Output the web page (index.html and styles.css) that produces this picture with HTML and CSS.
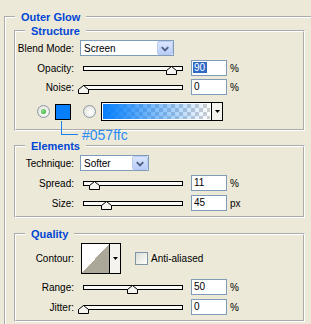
FILE: index.html
```html
<!DOCTYPE html>
<html lang="en">
<head>
<meta charset="UTF-8">
<meta name="viewport" content="width=device-width, initial-scale=1.0">
<title>Outer Glow</title>
<link rel="stylesheet" href="styles.css">
</head>
<body>

<div class="group outer">
  <span class="group-title">Outer Glow</span>

  <div class="group structure">
    <span class="group-title">Structure</span>
    <div class="row">
      <span class="label">Blend Mode:</span>
      <div class="select wide"><span class="select-text">Screen</span><span class="select-btn"><svg width="15" height="13" viewBox="0 0 15 13"><path d="M4 5 L7.5 8.5 L11 5" fill="none" stroke="#4d6185" stroke-width="2"/></svg></span></div>
    </div>
    <div class="row gap4">
      <span class="label">Opacity:</span>
      <div class="slider"><span class="thumb" style="left: 90%"><svg width="11" height="9" viewBox="0 0 11 9"><path d="M5.5 0.5 L10.5 4.5 L10.5 8.5 L0.5 8.5 L0.5 4.5 Z" fill="#f6f5f0" stroke="#000"/></svg></span></div>
      <div class="field"><span class="selected">90</span></div>
      <span class="unit">%</span>
    </div>
    <div class="row gap3">
      <span class="label">Noise:</span>
      <div class="slider"><span class="thumb" style="left: 0%"><svg width="11" height="9" viewBox="0 0 11 9"><path d="M5.5 0.5 L10.5 4.5 L10.5 8.5 L0.5 8.5 L0.5 4.5 Z" fill="#f6f5f0" stroke="#000"/></svg></span></div>
      <div class="field">0</div>
      <span class="unit">%</span>
    </div>
    <div class="color-row">
      <span class="radio checked"></span>
      <span class="swatch"></span>
      <span class="radio"></span>
      <div class="gradient">
        <span class="gradient-fill"></span>
        <span class="drop"><svg width="9" height="5" viewBox="0 0 9 5"><path d="M2 1 L7 1 L4.5 4 Z" fill="#000"/></svg></span>
      </div>
    </div>
  </div>

  <div class="group elements">
    <span class="group-title">Elements</span>
    <div class="row">
      <span class="label">Technique:</span>
      <div class="select narrow"><span class="select-text">Softer</span><span class="select-btn"><svg width="15" height="13" viewBox="0 0 15 13"><path d="M4 5 L7.5 8.5 L11 5" fill="none" stroke="#4d6185" stroke-width="2"/></svg></span></div>
    </div>
    <div class="row gap4">
      <span class="label">Spread:</span>
      <div class="slider"><span class="thumb" style="left: 11%"><svg width="11" height="9" viewBox="0 0 11 9"><path d="M5.5 0.5 L10.5 4.5 L10.5 8.5 L0.5 8.5 L0.5 4.5 Z" fill="#f6f5f0" stroke="#000"/></svg></span></div>
      <div class="field">11</div>
      <span class="unit">%</span>
    </div>
    <div class="row gap4">
      <span class="label">Size:</span>
      <div class="slider"><span class="thumb" style="left: 23%"><svg width="11" height="9" viewBox="0 0 11 9"><path d="M5.5 0.5 L10.5 4.5 L10.5 8.5 L0.5 8.5 L0.5 4.5 Z" fill="#f6f5f0" stroke="#000"/></svg></span></div>
      <div class="field">45</div>
      <span class="unit">px</span>
    </div>
  </div>

  <div class="group quality">
    <span class="group-title">Quality</span>
    <div class="row contour-row">
      <span class="label">Contour:</span>
      <div class="contour">
        <span class="contour-graph"></span>
        <span class="drop"><svg width="9" height="5" viewBox="0 0 9 5"><path d="M2 1 L7 1 L4.5 4 Z" fill="#000"/></svg></span>
      </div>
      <span class="checkbox"></span>
      <span class="check-label">Anti-aliased</span>
    </div>
    <div class="row gap5">
      <span class="label">Range:</span>
      <div class="slider"><span class="thumb" style="left: 50%"><svg width="11" height="9" viewBox="0 0 11 9"><path d="M5.5 0.5 L10.5 4.5 L10.5 8.5 L0.5 8.5 L0.5 4.5 Z" fill="#f6f5f0" stroke="#000"/></svg></span></div>
      <div class="field">50</div>
      <span class="unit">%</span>
    </div>
    <div class="row gap4">
      <span class="label">Jitter:</span>
      <div class="slider"><span class="thumb" style="left: 0%"><svg width="11" height="9" viewBox="0 0 11 9"><path d="M5.5 0.5 L10.5 4.5 L10.5 8.5 L0.5 8.5 L0.5 4.5 Z" fill="#f6f5f0" stroke="#000"/></svg></span></div>
      <div class="field">0</div>
      <span class="unit">%</span>
    </div>
  </div>
</div>

<!-- colour callout drawn over the Structure box -->
<div class="callout">
  <span class="callout-line"></span>
  <span class="callout-text">#057ffc</span>
</div>

</body>
</html>
```

FILE: styles.css
```css
body {
  margin: 0;
  background: #ece9d8;
  font-family: "Liberation Sans", Arial, sans-serif;
  font-size: 10px;
  color: #000;
}
.group {
  position: relative;
  border: 2px groove #fff;
}
.group-title {
  position: absolute;
  top: -8px;
  left: 9px;
  padding: 0 6px;
  background: #ece9d8;
  font: bold 11px/14px "Liberation Sans", Arial, sans-serif;
  color: #0046d5;
}
.outer {
  box-sizing: border-box;
  width: 307px;
  margin: 16px 0 0 4px;
  padding: 12px 6px 2px 8px;
  border-right: 0;
  border-bottom: 0;
}
.structure {
  padding: 8px 0;
}
.elements {
  margin-top: 14px;
  padding: 8px 0 5px;
}
.quality {
  margin-top: 15px;
  padding: 8px 0 5px;
}
.row {
  display: flex;
  align-items: center;
  height: 16px;
}
.gap3 {
  margin-top: 3px;
}
.gap4 {
  margin-top: 4px;
}
.gap5 {
  margin-top: 5px;
}
.label {
  width: 58px;
  margin-right: 6px;
  text-align: right;
  white-space: nowrap;
}
.select {
  box-sizing: border-box;
  display: flex;
  align-items: center;
  height: 16px;
  border: 1px solid #7f9db9;
  background: #fff;
}
.select.wide {
  width: 94px;
}
.select.narrow {
  width: 69px;
}
.select-text {
  flex: 1;
  padding-left: 3px;
}
.select-btn {
  box-sizing: border-box;
  display: flex;
  align-items: center;
  justify-content: center;
  width: 16px;
  height: 14px;
  border: 1px solid #b9cbf3;
  border-radius: 2px;
  background: linear-gradient(#dbe6fd, #b9cdf6);
}
.slider {
  position: relative;
  box-sizing: border-box;
  width: 100px;
  height: 5px;
  margin: 0 8px 0 3px;
  border: 1px solid #000;
  background: #fbfaf4;
}
.thumb {
  position: absolute;
  top: -1px;
  margin-left: -6px;
  line-height: 0;
}
.field {
  box-sizing: border-box;
  width: 36px;
  height: 16px;
  padding-left: 2px;
  border: 1px solid #7f9db9;
  background: #fff;
  line-height: 14px;
}
.selected {
  margin-left: -1px;
  padding: 0 2px 0 1px;
  background: #316ac5;
  color: #fff;
}
.unit {
  margin-left: 3px;
}
.color-row {
  display: flex;
  align-items: center;
  height: 19px;
  margin-top: 7px;
  padding-left: 21px;
}
.radio {
  box-sizing: border-box;
  position: relative;
  width: 13px;
  height: 13px;
  border: 1px solid #8a97a3;
  border-radius: 50%;
  background: radial-gradient(circle at 60% 60%, #fff, #dcdcd4);
}
.radio.checked::after {
  content: "";
  position: absolute;
  left: 3px;
  top: 3px;
  width: 5px;
  height: 5px;
  border-radius: 50%;
  background: radial-gradient(circle at 40% 40%, #8de38d, #21a121);
}
.swatch {
  box-sizing: border-box;
  width: 16px;
  height: 16px;
  margin: 0 12px 0 5px;
  border: 1px solid #000;
  background: #057ffc;
}
.gradient {
  box-sizing: border-box;
  display: flex;
  width: 122px;
  height: 19px;
  margin-left: 5px;
  border: 1px solid #000;
  background: #fff;
}
.gradient-fill {
  flex: 1;
  margin: 1px;
  background:
    linear-gradient(to right, #057ffc, rgba(5, 127, 252, 0)),
    conic-gradient(#cfcfcf 25%, #fff 0 50%, #cfcfcf 0 75%, #fff 0) 0 0 / 8px 8px;
}
.drop {
  display: flex;
  align-items: center;
  justify-content: center;
  width: 10px;
  border-left: 1px solid #000;
  background: #f4f3ee;
}
.contour-row {
  height: 31px;
}
.contour {
  box-sizing: border-box;
  display: flex;
  width: 40px;
  height: 31px;
  margin-left: 1px;
  border: 1px solid #000;
  background: #fff;
}
.contour-graph {
  flex: 1;
  background: linear-gradient(to top left, #aca899 50%, #fff 50%);
}
.checkbox {
  box-sizing: border-box;
  width: 13px;
  height: 13px;
  margin: 0 3px 0 14px;
  border: 1px solid #8094a8;
  background: linear-gradient(135deg, #dcdcd6, #fff);
}
.callout {
  position: absolute;
  left: 61px;
  top: 121px;
  display: flex;
  color: #2a8cf2;
}
.callout-line {
  width: 16px;
  height: 13px;
  border-left: 1px solid #1a82f2;
  border-bottom: 1px solid #1a82f2;
}
.callout-text {
  margin: 6px 0 0 4px;
  font-size: 14px;
  line-height: 16px;
}
```
